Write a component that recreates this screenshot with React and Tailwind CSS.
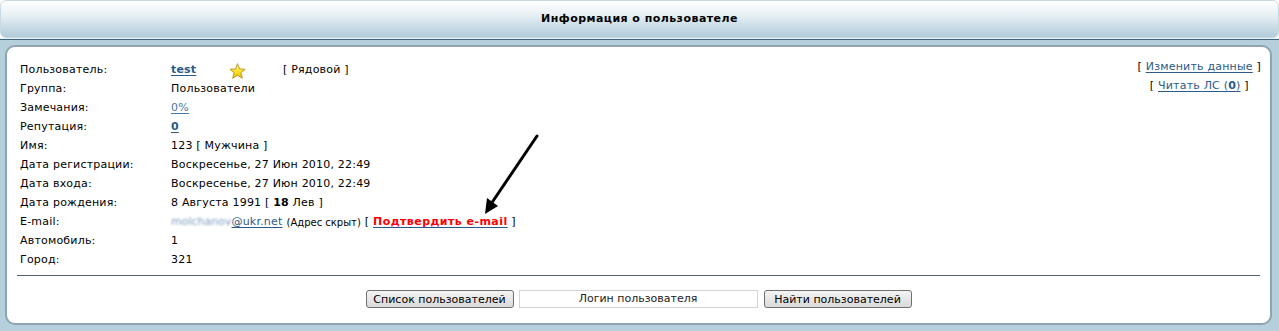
import React from "react";

function Star() {
  return (
    <svg width="17" height="16" viewBox="0 0 24 23" className="block">
      <defs>
        <linearGradient id="sg" x1="0" y1="0" x2="0" y2="1">
          <stop offset="0" stopColor="#fff6a0" />
          <stop offset="0.5" stopColor="#ffe030" />
          <stop offset="1" stopColor="#f2b800" />
        </linearGradient>
      </defs>
      <polygon
        points="12,1 15,8.6 23,9 16.8,14 19,22 12,17.6 5,22 7.2,14 1,9 9,8.6"
        fill="url(#sg)"
        stroke="#b08a10"
        strokeWidth="1.2"
        strokeLinejoin="round"
      />
    </svg>
  );
}

function Row({ label, children }) {
  return (
    <div className="flex h-[19px] items-center whitespace-nowrap">
      <div className="w-[151px] shrink-0">{label}</div>
      <div className="flex items-center">{children}</div>
    </div>
  );
}

const link = "text-[#2b5a88] underline underline-offset-[2px]";

export default function App() {
  return (
    <div className="relative w-[1279px] h-[331px] bg-white font-['DejaVu_Sans',Verdana,sans-serif] text-[11px] tracking-[0.2px] text-black overflow-hidden">
      {/* header */}
      <div className="h-[38px] rounded-[6px] border border-[#c9d9e3] bg-gradient-to-b from-white via-[#e6eff4] via-40% to-[#b2ccda] flex items-center justify-center">
        <span className="font-bold text-[11px] tracking-[0.45px]">Информация о пользователе</span>
      </div>
      <div className="h-px bg-[#e8f0f4]" />
      <div className="h-px bg-[#3f6680]" />
      {/* body */}
      <div className="h-[291px] bg-[#b6cfdc] pt-[5px] pl-[5px] pr-[7px] pb-[6px]">
        <div className="h-full rounded-[10px] border-2 border-[#8ea4b1] bg-white flex flex-col">
          <div className="flex pt-[14px] pl-[13px] pr-[9px]">
            <div className="flex-1">
              <Row label="Пользователь:">
                <span className="w-[58px] inline-block">
                  <a className={`${link} font-bold`}>test</a>
                </span>
                <Star />
                <span className="ml-[37px]">[ Рядовой ]</span>
              </Row>
              <Row label="Группа:">Пользователи</Row>
              <Row label="Замечания:">
                <a className="text-[#4a78a6] underline underline-offset-[2px]">0%</a>
              </Row>
              <Row label="Репутация:">
                <a className={`${link} font-bold`}>0</a>
              </Row>
              <Row label="Имя:">123 [ Мужчина ]</Row>
              <Row label="Дата регистрации:">Воскресенье, 27 Июн 2010, 22:49</Row>
              <Row label="Дата входа:">Воскресенье, 27 Июн 2010, 22:49</Row>
              <Row label="Дата рождения:">
                <span>
                  8 Августа 1991 [ <b>18</b> Лев ]
                </span>
              </Row>
              <Row label="E-mail:">
                <span className="text-[#7d9cc0] blur-[1.2px] tracking-[0px]">molchanov</span>
                <a className={link}>@ukr.net</a>
                <span className="text-[10px] ml-[4px] tracking-[0px]">(Адрес скрыт)</span>
                <span className="ml-[4px]">[&nbsp;</span>
                <a className="font-bold tracking-[0.45px] text-[#ff0000] underline decoration-[#2b5a88] underline-offset-[2px]">
                  Подтвердить e-mail
                </a>
                <span>&nbsp;]</span>
              </Row>
              <Row label="Автомобиль:">1</Row>
              <Row label="Город:">321</Row>
            </div>
            <div className="flex flex-col items-center -mt-[4px]">
              <div className="h-[19px] leading-[19px] whitespace-nowrap">
                [ <a className={link}>Изменить данные</a> ]
              </div>
              <div className="h-[19px] leading-[19px] whitespace-nowrap">
                [ <a className={link}>Читать ЛС (<b>0</b>)</a> ]
              </div>
            </div>
          </div>
          <div className="mx-[10px] mt-[5px] border-t border-[#4e6276]" />
          <div className="flex justify-center gap-[5px] pt-[14px]">
            <button className="w-[148px] h-[18px] rounded-[3px] border border-[#707070] bg-gradient-to-b from-[#f4f4f4] to-[#d9d9d9] text-[11px] leading-none text-black tracking-[0px]">
              Список пользователей
            </button>
            <div className="w-[239px] h-[18px] border border-[#d4d4d4] bg-white flex items-center justify-center text-[11px] text-[#222] tracking-[0px]">
              Логин пользователя
            </div>
            <button className="ml-[1px] w-[148px] h-[18px] rounded-[3px] border border-[#707070] bg-gradient-to-b from-[#f4f4f4] to-[#d9d9d9] text-[11px] leading-none text-black tracking-[0px]">
              Найти пользователей
            </button>
          </div>
        </div>
      </div>
      {/* annotation arrow */}
      <svg className="absolute left-0 top-0 pointer-events-none" width="1279" height="331">
        <line x1="537" y1="136" x2="491" y2="204" stroke="#000" strokeWidth="3" strokeLinecap="round" />
        <polygon points="485,214 498,206 487,198" fill="#000" />
      </svg>
    </div>
  );
}
